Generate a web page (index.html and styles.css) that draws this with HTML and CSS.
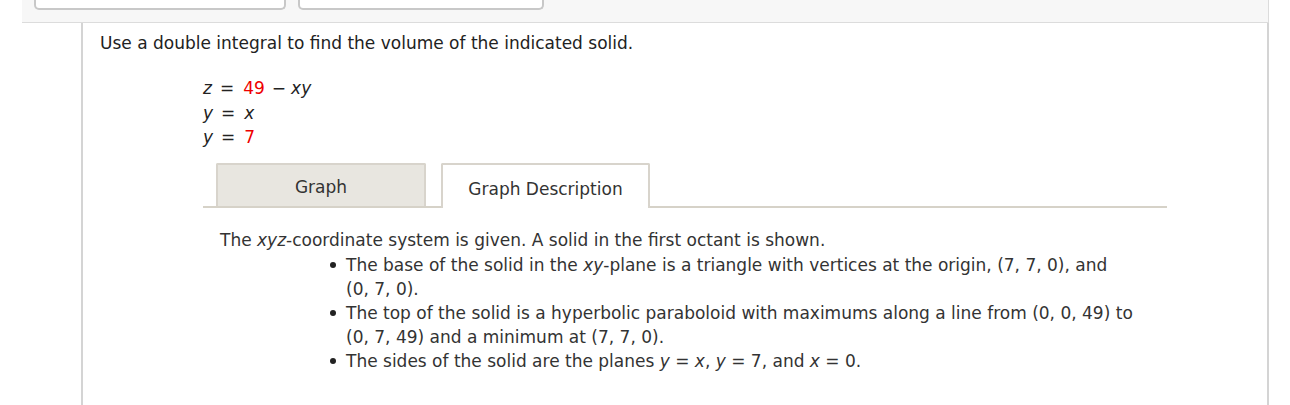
FILE: index.html
```html
<!DOCTYPE html>
<html>
<head>
<meta charset="utf-8">
<link rel="stylesheet" href="styles.css">
</head>
<body>
<div class="topbar">
  <div class="topbtn b1"></div>
  <div class="topbtn b2"></div>
</div>
<div class="panel">
  <p class="question">Use a double integral to find the volume of the indicated solid.</p>
  <div class="eqs">
    <div class="eq"><i>z</i><span class="op">=</span><span class="red">49</span><span class="minus">&minus;</span><i>xy</i></div>
    <div class="eq"><i>y</i><span class="op">=</span><i>x</i></div>
    <div class="eq"><i>y</i><span class="op">=</span><span class="red">7</span></div>
  </div>
  <div class="tabsarea">
    <div class="tabs">
      <div class="tab inactive">Graph</div>
      <div class="tab active">Graph Description</div>
    </div>
    <div class="desc">
      <p class="intro">The <i>xyz</i>-coordinate system is given. A solid in the first octant is shown.</p>
      <ul class="bullets">
        <li>The base of the solid in the <i>xy</i>-plane is a triangle with vertices at the origin, <span class="nw">(7, 7, 0),</span> and <span class="nw">(0, 7, 0).</span></li>
        <li>The top of the solid is a hyperbolic paraboloid with maximums along a line from <span class="nw">(0, 0, 49)</span> to <span class="nw">(0, 7, 49)</span> and a minimum at <span class="nw">(7, 7, 0).</span></li>
        <li>The sides of the solid are the planes <i>y</i> = <i>x</i>, <i>y</i> = 7, and <i>x</i> = 0.</li>
      </ul>
    </div>
  </div>
</div>
</body>
</html>
```
FILE: styles.css
```css
html, body {
  margin: 0;
  padding: 0;
  background: #fff;
}
body {
  width: 1290px;
  height: 405px;
  overflow: hidden;
  font-family: "DejaVu Sans", Verdana, sans-serif;
  font-size: 17px;
  color: #222;
}
.topbar {
  margin-left: 22px;
  width: 1234px;
  height: 22px;
  background: #f7f7f7;
  border-bottom: 1px solid #dcdcdc;
  border-right: 1px solid #dcdcdc;
  display: flex;
  align-items: flex-start;
  gap: 12px;
  padding-left: 12px;
}
.topbtn {
  height: 8px;
  background: #fff;
  border: 2px solid #c8c8c8;
  border-top: none;
  border-radius: 0 0 5px 5px;
}
.b1 { width: 248px; }
.b2 { width: 242px; }
.panel {
  margin-left: 81px;
  width: 1188px;
  height: 390px;
  border-left: 2px solid #d4d4d4;
  border-right: 2px solid #d4d4d4;
  padding: 8px 0 0 17px;
  box-sizing: border-box;
}
.question {
  margin: 0;
  line-height: 24px;
}
.eqs {
  margin: 21px 0 0 103px;
}
.eq {
  line-height: 24.5px;
  white-space: nowrap;
}
.op {
  margin: 0 9px 0 8px;
}
.minus {
  margin: 0 5px 0 7px;
}
.red { color: #ee0000; }
.tabsarea {
  margin: 13px 0 0 103px;
  width: 964px;
}
.tabs {
  display: flex;
  gap: 15px;
  padding-left: 13px;
  border-bottom: 2px solid #d6d2c8;
  height: 43px;
}
.tab {
  height: 43px;
  box-sizing: border-box;
  border: 2px solid #d8d4cc;
  border-bottom: none;
  border-radius: 2px 2px 0 0;
  display: flex;
  align-items: center;
  justify-content: center;
  color: #333;
  padding-top: 4px;
}
.tab.inactive {
  width: 210px;
  background: #e8e6e0;
}
.tab.active {
  width: 209px;
  background: #fff;
  height: 45px;
  margin-bottom: -2px;
  padding-top: 6px;
}
.desc {
  padding: 20px 0 0 17px;
  color: #333;
  line-height: 24px;
}
.intro {
  margin: 0;
}
.bullets {
  margin: 1px 0 0 0;
  padding-left: 126px;
  width: 805px;
  list-style: none;
}
.bullets li {
  line-height: 24px;
}
.bullets li::before {
  content: "";
  display: inline-block;
  width: 6px;
  height: 6px;
  border-radius: 50%;
  background: #222;
  margin-left: -16px;
  margin-right: 10px;
  vertical-align: middle;
  position: relative;
  top: -1px;
}
.nw {
  white-space: nowrap;
}
```
